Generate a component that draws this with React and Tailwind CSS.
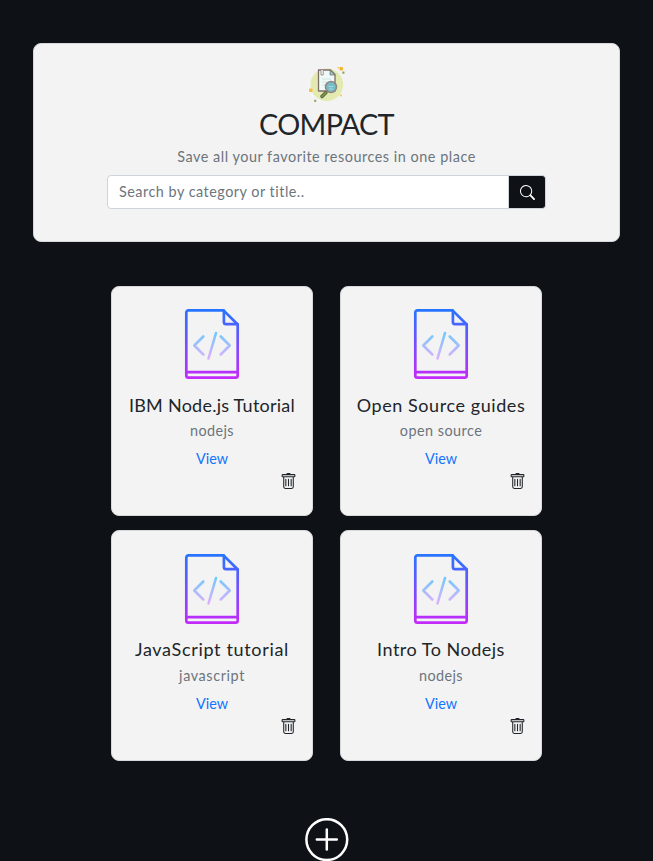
import { BsSearch, BsTrash } from "react-icons/bs";

const resources = [
  { title: "IBM Node.js Tutorial", category: "nodejs", titleClass: "mt-[13px] tracking-[0.25px]", categoryClass: "mt-[2px] tracking-[0.4px]" },
  { title: "Open Source guides", category: "open source", titleClass: "mt-[13px] tracking-[0.57px]", categoryClass: "mt-[2px] tracking-[0.47px]" },
  { title: "JavaScript tutorial", category: "javascript", titleClass: "mt-3 tracking-[0.67px]", categoryClass: "mt-[3px] tracking-[0.6px]" },
  { title: "Intro To Nodejs", category: "nodejs", titleClass: "mt-3 tracking-[0.5px]", categoryClass: "mt-[3px] tracking-[0.4px]" },
];

function Logo() {
  return (
    <svg className="h-9 w-9" viewBox="0 0 36 36" fill="none">
      <circle cx="17.8" cy="18.7" r="16.3" fill="#e3eab0" />
      <path d="M9.5 4h12l4.5 4.5V25H9.5z" fill="#eef9f8" stroke="#7d6d69" strokeWidth="1.3" strokeLinejoin="round" />
      <path d="M21 4v5h5z" fill="#8bc9cb" stroke="#7d6d69" strokeWidth=".7" />
      <path d="M12 4v5h2.2V4" fill="#fff" stroke="#988681" strokeWidth=".9" />
      <path d="M13 13h9M13 16h5M13 19h4" stroke="#c8dfdf" strokeWidth=".8" />
      <path d="m17 26.5-4 4" stroke="#4e5941" strokeWidth="3.4" strokeLinecap="round" />
      <path d="m17 26.5-4 4" stroke="#789444" strokeWidth="1.9" strokeLinecap="round" />
      <circle cx="22" cy="21" r="5.5" fill="#77bdc7" stroke="#918682" strokeWidth="1.5" />
      <path d="M19.5 20.5h5M20 23h4" stroke="#a2d9df" strokeWidth="1" />
      <rect x="30.5" y="1" width="3.5" height="3.5" rx=".7" fill="#f3b72e" />
      <rect x="28.5" y="1" width="1.5" height="1.5" fill="#f3c35a" />
      <rect x="33.3" y="5.5" width="2.2" height="2.2" rx=".5" fill="#8aa75b" />
      <rect x="0" y="22.5" width="3.5" height="3.5" rx=".8" fill="#f5bb4b" />
      <rect x="2.5" y="29" width="1.6" height="1.6" fill="#fff" />
      <rect x="5.2" y="33.8" width="2" height="2" fill="#83a253" />
      <rect x="31" y="28.5" width="1.8" height="1.8" fill="#f1c763" />
    </svg>
  );
}

function CodeFile() {
  return (
    <svg className="h-[72px] w-14" viewBox="0 0 56 72" fill="none" strokeLinecap="round" strokeLinejoin="round">
      <defs>
        <linearGradient id="page" x1="0" y1="1" x2="0" y2="71" gradientUnits="userSpaceOnUse">
          <stop stopColor="#2575ff" />
          <stop offset="1" stopColor="#c529fa" />
        </linearGradient>
        <linearGradient id="code" x1="0" y1="24" x2="0" y2="51" gradientUnits="userSpaceOnUse">
          <stop stopColor="#6bcafd" />
          <stop offset="1" stopColor="#dfb0fd" />
        </linearGradient>
      </defs>
      <g stroke="url(#page)" strokeWidth="2.7">
        <path d="M39.5 2.4H4.5a2.2 2.2 0 0 0-2.2 2.2V67.4a2.2 2.2 0 0 0 2.2 2.2H51.5a2.2 2.2 0 0 0 2.2-2.2V16.5z" />
        <path d="M39.9 2.6V14a2.2 2.2 0 0 0 2.2 2.2H53.5M2.5 64.1H53.5" />
      </g>
      <path d="M19.3 28.5 10.3 37.5l9 9M36.7 28.5l9 9-9 9M32 25 24.5 50.5" stroke="url(#code)" strokeWidth="2.6" />
    </svg>
  );
}

function ResourceCard({ resource }) {
  return (
    <article className="flex flex-col items-center rounded-lg border border-[#d7d8d9] bg-[#f3f3f3] pt-[21px] nth-[n+3]:pt-[22px]">
      <CodeFile />
      <h2 className={`text-[18px] leading-6 whitespace-nowrap text-[#212529] ${resource.titleClass}`}>{resource.title}</h2>
      <p className={`text-[14.4px] leading-6 text-[#6c757d] ${resource.categoryClass}`}>{resource.category}</p>
      <a className="mt-1 text-[14.4px] leading-6 text-[#1476ff]" href="#view">View</a>
      <button className="mt-[2px] mr-[15px] self-end text-[#212529]" aria-label={`Delete ${resource.title}`}>
        <BsTrash className="h-[17px] w-[17px]" />
      </button>
    </article>
  );
}

export default function App() {
  return (
    <main className="flex h-[861px] w-[653px] flex-col items-center overflow-hidden bg-[#0e1216] pt-[43px] font-[Lato,sans-serif]">
      <header className="flex h-[199px] w-[587px] shrink-0 flex-col items-center rounded-lg border border-[#d5d8da] bg-[#f3f3f3] pt-[22px]">
        <Logo />
        <h1 className="mt-1 text-[28.8px] leading-[36px] tracking-[-0.7px] text-[#212529]">COMPACT</h1>
        <p className="mt-[3px] text-[14.4px] leading-6 tracking-[0.53px] text-[#6c757d]">Save all your favorite resources in one place</p>
        <form className="mt-[6px] flex h-[34px] w-[439px]">
          <input
            className="min-w-0 flex-1 rounded-l border border-[#ced4da] bg-white px-[11px] text-[14.4px] tracking-[0.5px] outline-none placeholder:text-[#6c757d]"
            placeholder="Search by category or title.."
            aria-label="Search resources"
          />
          <button type="button" className="flex w-[37px] items-center justify-center rounded-r border border-l-0 border-[#ced4da] bg-[#0e1216] text-white" aria-label="Search">
            <BsSearch className="h-[15px] w-[15px]" />
          </button>
        </form>
      </header>
      <section className="mt-[44px] grid shrink-0 grid-cols-[202px_202px] grid-rows-[230px_231px] gap-x-[27px] gap-y-[14px]">
        {resources.map((resource) => <ResourceCard key={resource.title} resource={resource} />)}
      </section>
      <button className="mt-[57px] shrink-0 text-white" aria-label="Add resource">
        <svg className="h-11 w-11" viewBox="0 0 44 44" fill="none" stroke="currentColor" strokeWidth="2.5" strokeLinecap="round">
          <circle cx="21.8" cy="21.6" r="20.4" />
          <path d="M21.8 11.6v20M11.8 21.6h20" />
        </svg>
      </button>
    </main>
  );
}
